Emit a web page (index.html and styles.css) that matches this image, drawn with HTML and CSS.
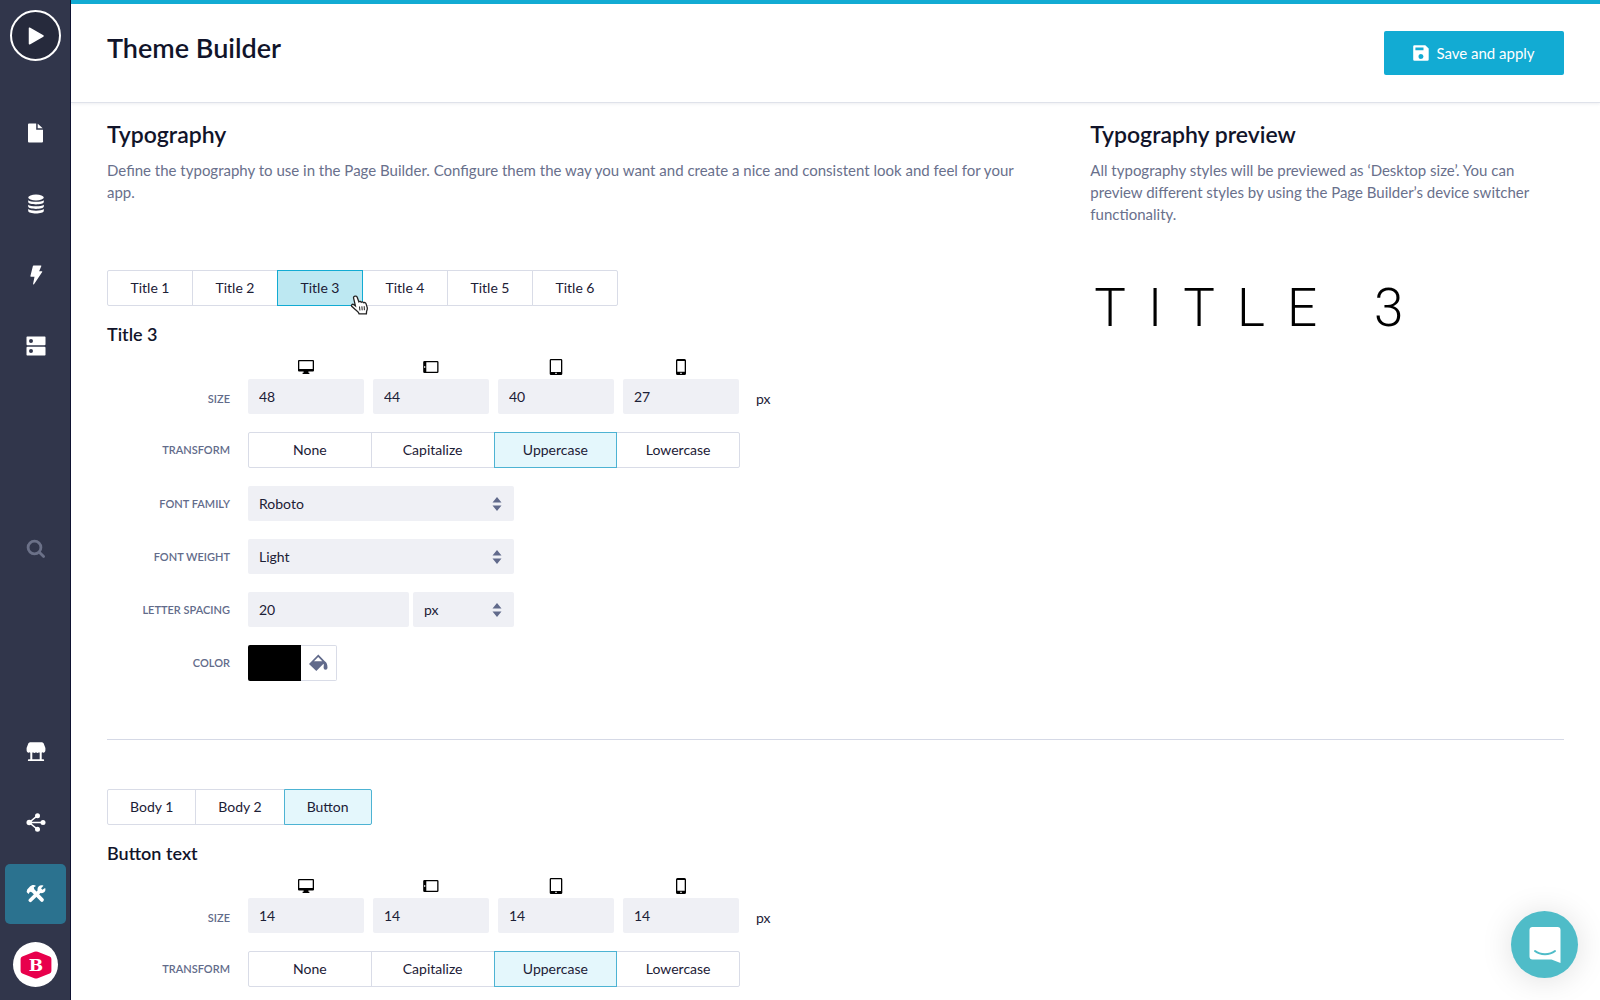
FILE: index.html
```html
<!DOCTYPE html>
<html lang="en">
<head>
<meta charset="utf-8">
<meta name="viewport" content="width=device-width, initial-scale=1">
<title>Theme Builder</title>
<link rel="stylesheet" href="styles.css">
</head>
<body>
<svg class="sprite" aria-hidden="true">
  <symbol id="desktop" viewBox="0 0 18 16"><path fill-rule="evenodd" d="M2 1h14a1 1 0 0 1 1 1v9.500a1 1 0 0 1-1 1h-4.600v1.300h1V15H5.600v-1.200h1v-1.300H2a1 1 0 0 1-1-1V2a1 1 0 0 1 1-1zm.3 1.300v7.700h13.400V2.300z"/></symbol>
  <symbol id="landscape" viewBox="0 0 18 16"><path fill-rule="evenodd" d="M2.500 2h12.700a1.300 1.300 0 0 1 1.300 1.300v9.400a1.300 1.300 0 0 1-1.300 1.300H2.500a1.300 1.300 0 0 1-1.300-1.300V3.300A1.300 1.300 0 0 1 2.500 2zM4.300 3.200v9.600h10.900V3.200zM2 7.300v1.400h1.300V7.300z"/></symbol>
  <symbol id="tablet" viewBox="0 0 18 16"><path fill-rule="evenodd" d="M4 0h10a1.300 1.300 0 0 1 1.300 1.300v13.400A1.300 1.300 0 0 1 14 16H4a1.300 1.300 0 0 1-1.300-1.300V1.300A1.300 1.300 0 0 1 4 0zm0 1.300v11.600h10V1.300zm4.300 12.500v1.200h1.400v-1.200z"/></symbol>
  <symbol id="phone" viewBox="0 0 18 16"><path fill-rule="evenodd" d="M5.500 0h7a1.500 1.500 0 0 1 1.500 1.500v13a1.500 1.500 0 0 1-1.500 1.500h-7A1.500 1.500 0 0 1 4 14.500v-13A1.500 1.500 0 0 1 5.500 0zm-.2 2v10.800h7.400V2zm3 11.800V15h1.400v-1.200z"/></symbol>
  <symbol id="sort" viewBox="0 0 10 14"><path d="M5 0l4.500 5.600H.5zM5 14L.5 8.400h9z"/></symbol>
</svg>

<nav class="sidebar" aria-label="Main">
  <div class="nav-group">
    <a class="nav-item nav-item--play" href="#" aria-label="Preview">
      <span class="play"><svg width="16" height="18" viewBox="0 0 16 18"><path d="M1.500 1.200v15.600L15 9z" stroke="#fff" stroke-width="1.500" stroke-linejoin="round"/></svg></span>
    </a>
    <a class="nav-item" href="#" aria-label="Pages">
      <svg width="20" height="20" viewBox="0 0 20 20"><path d="M3.500.5h6.700v6.300h6.800v11.700a1 1 0 0 1-1 1H3a1 1 0 0 1-1-1V1.500a1 1 0 0 1 1-1zM11.700.8a.5.500 0 0 1 .4.200l4.600 4.200H11.700z"/></svg>
    </a>
    <a class="nav-item" href="#" aria-label="Data">
      <svg width="20" height="20" viewBox="0 0 20 20"><ellipse cx="10" cy="3.500" rx="7.800" ry="2.900"/><path d="M2.200 6.200c2.500 2.200 13.100 2.200 15.600 0v1.900c0 3.100-15.600 3.100-15.600 0zM2.200 10.700c2.500 2.200 13.100 2.200 15.600 0v1.900c0 3.100-15.600 3.100-15.600 0zM2.200 15.100c2.500 2.200 13.100 2.200 15.600 0V17c0 3.300-15.600 3.300-15.600 0z"/></svg>
    </a>
    <a class="nav-item" href="#" aria-label="Actions">
      <svg width="20" height="20" viewBox="0 0 20 20"><path d="M7.600.6h7.200a.5.500 0 0 1 .5.700l-2.200 5h2.700a.5.500 0 0 1 .4.800L8 19.200c-.4.500-1.100.2-.9-.4l1.400-7H5a.6.600 0 0 1-.6-.7L6.900 1.100a.7.700 0 0 1 .7-.5z"/></svg>
    </a>
    <a class="nav-item" href="#" aria-label="Servers">
      <svg width="20" height="20" viewBox="0 0 20 20"><path fill-rule="evenodd" d="M1.200.5h17.600a.7.700 0 0 1 .7.700v7a1 1 0 0 1-1 1h-17a1 1 0 0 1-1-1v-7a.7.700 0 0 1 .7-.7zM5 2.900a2 2 0 1 0 0 4 2 2 0 0 0 0-4zM1.500 10.700h17a1 1 0 0 1 1 1v7a.7.700 0 0 1-.7.700H1.200a.7.700 0 0 1-.7-.7v-7a1 1 0 0 1 1-1zM5 13a2 2 0 1 0 0 4 2 2 0 0 0 0-4z"/></svg>
    </a>
  </div>
  <a class="nav-item nav-item--dim" href="#" aria-label="Search">
    <svg width="20" height="20" viewBox="0 0 20 20" fill="none" stroke="currentColor" stroke-width="2.800" stroke-linecap="round"><circle cx="8.500" cy="8.500" r="6.400"/><path d="M13.300 13.300l4.300 4.300"/></svg>
  </a>
  <div class="nav-group nav-group--bottom">
    <a class="nav-item" href="#" aria-label="Store">
      <svg width="20" height="20" viewBox="0 0 20 20"><path d="M4.600.2h10.800c1.100 0 2 .5 2.400 1.500l1.600 4.300v2.300c0 2.200-2 2.900-3.200 1.900a2.300 2.300 0 0 1-3.100.1 2.300 2.300 0 0 1-3.100 0 2.300 2.300 0 0 1-3.100 0 2.300 2.300 0 0 1-3.100-.1C2.600 11.200.6 10.500.6 8.300V6l1.600-4.300C2.600.7 3.500.2 4.600.2z"/><path d="M4.300 10h2v7.200h7.400V10h2v7.200h1.500a.9.900 0 0 1 0 1.900H2.800a.9.900 0 0 1 0-1.900h1.500z"/></svg>
    </a>
    <a class="nav-item" href="#" aria-label="Integrations">
      <svg width="20" height="20" viewBox="0 0 20 20"><circle cx="3.200" cy="9.500" r="2.700"/><circle cx="11.500" cy="2.700" r="2.500"/><circle cx="17" cy="9.500" r="2.500"/><circle cx="11.500" cy="16.300" r="2.500"/><path fill="none" stroke="#fff" stroke-width="1.500" d="M11.500 2.700L3.200 9.500l8.300 6.800M3.200 9.500H17"/></svg>
    </a>
    <a class="nav-item nav-item--active" href="#" aria-label="Tools" aria-current="page">
      <span class="tile"><svg width="20" height="20" viewBox="0 0 20 20"><path d="M3.700 2.700C5.600.8 8.500.5 10 2L7.800 3.200l.5 2.100 9 9.200a1.800 1.800 0 0 1-2.700 2.700L5.800 8.200 4 7.800 2.500 10 .6 8.100l.6-2.600z"/><path d="M17.500 1.700l-2.400 2.500 1.200 1.500 2.800-1.800c1.200 3-.9 6-4.600 5.200l-8.800 8.500a1.800 1.800 0 0 1-2.600-2.600l8.500-8.400c-.8-3.600 2.400-6.600 5.900-4.900z"/></svg></span>
    </a>
    <a class="nav-item" href="#" aria-label="Account">
      <span class="avatar"><svg width="34" height="28" viewBox="0 0 34 28"><path d="M15.300.8a4 4 0 0 1 3.400 0l12 4.700a2.500 2.500 0 0 1 1.700 2.400v12.200a2.500 2.500 0 0 1-1.700 2.400l-12 4.700a4 4 0 0 1-3.400 0l-12-4.700a2.500 2.500 0 0 1-1.700-2.400V7.900a2.500 2.500 0 0 1 1.700-2.400z" fill="#e8004c"/><text class="avatar-letter" x="17" y="20" text-anchor="middle">B</text></svg></span>
    </a>
  </div>
</nav>

<div class="page">
  <header class="page-header">
    <h1>Theme Builder</h1>
    <button class="save" type="button">
      <svg width="16" height="16" viewBox="0 0 16 16"><path fill-rule="evenodd" d="M1.500.3h10.800L15.700 3.500v11a1.300 1.300 0 0 1-1.300 1.300H1.500A1.300 1.300 0 0 1 .2 14.500V1.600A1.300 1.300 0 0 1 1.500.3zM2.400 2.400v2.900h8.100V2.400zM8 9a2.500 2.500 0 1 0 0 5 2.500 2.500 0 0 0 0-5z"/></svg>
      Save and apply
    </button>
  </header>

  <main class="content">
    <div class="intro">
      <section class="intro-main">
        <h2>Typography</h2>
        <p>Define the typography to use in the Page Builder. Configure them the way you want and create a nice and consistent look and feel for your app.</p>
      </section>
      <section>
        <h2>Typography preview</h2>
        <p>All typography styles will be previewed as ‘Desktop size’. You can preview different styles by using the Page Builder’s device switcher functionality.</p>
      </section>
    </div>

    <div class="block">
      <section class="editor">
        <div class="segments" role="group" aria-label="Title style">
          <button type="button">Title 1</button>
          <button type="button">Title 2</button>
          <button type="button" class="is-hovered" aria-pressed="true">Title 3
            <svg class="cursor" width="20" height="22" viewBox="0 0 20 22" aria-hidden="true"><path d="M4.800 1.200c1.300-.5 2.200.3 2.600 1.500l1.500 4.200c.7-.7 1.800-.6 2.300.3.700-.6 1.900-.4 2.300.5.900-.5 2.200.1 2.600 1.200l1.200 4c.3 1.300-.4 2.300-.7 3.300l-.2 2.600H9.100c-.6-2-2.100-2.800-3.600-4.100L1.700 11.300c-.9-1.200.6-2.600 2-1.700l1.700 1.300L3.600 3.200c-.3-.9.300-1.700 1.200-2z" fill="#fff" stroke="#222" stroke-width="1.300"/><path d="M9.500 11.500l.4 4M11.900 11.300l.3 4M14.200 11.200l.2 4" stroke="#222" stroke-width="1" fill="none"/></svg>
          </button>
          <button type="button">Title 4</button>
          <button type="button">Title 5</button>
          <button type="button">Title 6</button>
        </div>
        <h3>Title 3</h3>
        <form class="fields">
          <div class="row row--size">
            <label for="t-size">Size</label>
            <div class="sizes">
              <div class="size"><svg width="18" height="16"><use href="#desktop"/></svg><input id="t-size" type="text" value="48"></div>
              <div class="size"><svg width="18" height="16"><use href="#landscape"/></svg><input type="text" value="44" aria-label="Landscape tablet size"></div>
              <div class="size"><svg width="18" height="16"><use href="#tablet"/></svg><input type="text" value="40" aria-label="Tablet size"></div>
              <div class="size"><svg width="18" height="16"><use href="#phone"/></svg><input type="text" value="27" aria-label="Phone size"></div>
              <span class="unit">px</span>
            </div>
          </div>
          <div class="row">
            <span class="label" id="t-transform">Transform</span>
            <div class="segments segments--even" role="group" aria-labelledby="t-transform">
              <button type="button">None</button>
              <button type="button">Capitalize</button>
              <button type="button" aria-pressed="true">Uppercase</button>
              <button type="button">Lowercase</button>
            </div>
          </div>
          <div class="row">
            <label for="t-family">Font family</label>
            <div class="select"><select id="t-family"><option>Roboto</option></select><svg width="10" height="14"><use href="#sort"/></svg></div>
          </div>
          <div class="row">
            <label for="t-weight">Font weight</label>
            <div class="select"><select id="t-weight"><option>Light</option></select><svg width="10" height="14"><use href="#sort"/></svg></div>
          </div>
          <div class="row">
            <label for="t-spacing">Letter spacing</label>
            <div class="spacing">
              <input id="t-spacing" type="text" value="20">
              <div class="select"><select aria-label="Letter spacing unit"><option>px</option></select><svg width="10" height="14"><use href="#sort"/></svg></div>
            </div>
          </div>
          <div class="row">
            <label for="t-color">Color</label>
            <button class="color" id="t-color" type="button" aria-label="Pick a color">
              <span class="swatch"></span>
              <span class="bucket"><svg width="20" height="18" viewBox="0 0 20 18"><path fill-rule="evenodd" d="M9.300.6l6.500 6.700c1.900.8 2.700 3.600 2.700 6.500a1.900 1.900 0 0 1-3.900 0c0-2 .6-3.300-.1-4.100L7.300 16.900 0 9.900zM9.200 3L5 7.200h8.300z"/></svg></span>
            </button>
          </div>
        </form>
      </section>
      <div class="preview">Title 3</div>
    </div>

    <hr>

    <div class="block">
      <section class="editor">
        <div class="segments" role="group" aria-label="Text style">
          <button type="button">Body 1</button>
          <button type="button">Body 2</button>
          <button type="button" aria-pressed="true">Button</button>
        </div>
        <h3>Button text</h3>
        <form class="fields">
          <div class="row row--size">
            <label for="b-size">Size</label>
            <div class="sizes">
              <div class="size"><svg width="18" height="16"><use href="#desktop"/></svg><input id="b-size" type="text" value="14"></div>
              <div class="size"><svg width="18" height="16"><use href="#landscape"/></svg><input type="text" value="14" aria-label="Landscape tablet size"></div>
              <div class="size"><svg width="18" height="16"><use href="#tablet"/></svg><input type="text" value="14" aria-label="Tablet size"></div>
              <div class="size"><svg width="18" height="16"><use href="#phone"/></svg><input type="text" value="14" aria-label="Phone size"></div>
              <span class="unit">px</span>
            </div>
          </div>
          <div class="row">
            <span class="label" id="b-transform">Transform</span>
            <div class="segments segments--even" role="group" aria-labelledby="b-transform">
              <button type="button">None</button>
              <button type="button">Capitalize</button>
              <button type="button" aria-pressed="true">Uppercase</button>
              <button type="button">Lowercase</button>
            </div>
          </div>
        </form>
      </section>
    </div>
  </main>
</div>

<button class="chat" type="button" aria-label="Open chat">
  <svg width="34" height="38" viewBox="0 0 34 38"><path fill="#fff" d="M4.500 1h25A3 3 0 0 1 32.500 4v33l-9-3.500h-19a3 3 0 0 1-3-3V4a3 3 0 0 1 3-3z"/><path d="M7 25c5.500 4.300 14.500 4.300 20 0" fill="none" stroke="#4fbcc8" stroke-width="2" stroke-linecap="round"/></svg>
</button>
</body>
</html>
```
FILE: styles.css
```css
*,
*::before,
*::after {
  box-sizing: border-box;
}

body {
  margin: 0;
  display: flex;
  min-height: 100vh;
  background: #fff;
  color: #1c2036;
  font-family: Lato, "Liberation Sans", sans-serif;
  font-size: 14px;
}

button,
input,
select {
  margin: 0;
  font: inherit;
  color: inherit;
}

h1, h2, h3, p {
  margin: 0;
}

h1, h2, h3 {
  color: #11142a;
  font-weight: 600;
}

svg {
  display: block;
}

.sprite {
  position: absolute;
  width: 0;
  height: 0;
}

/* Sidebar */
.sidebar {
  position: sticky;
  top: 0;
  flex: none;
  display: flex;
  flex-direction: column;
  justify-content: space-between;
  width: 71px;
  height: 100vh;
  background: #31364b;
  box-shadow: inset -1px 0 #0f1332;
}

.nav-item {
  display: grid;
  place-items: center;
  height: 71px;
  color: #fff;
}

.nav-item svg {
  fill: currentColor;
}

.nav-item--play {
  margin-bottom: 26px;
}

.nav-item--dim {
  color: #6b7188;
}

.nav-item--dim svg {
  fill: none;
}

.play {
  display: grid;
  place-items: center;
  width: 51px;
  height: 51px;
  border: 2px solid #fff;
  border-radius: 50%;
  background: #262a3c;
}

.tile {
  display: grid;
  place-items: center;
  width: 61px;
  height: 60px;
  border-radius: 5px;
  background: #2b728f;
}

.avatar {
  display: grid;
  place-items: center;
  width: 45px;
  height: 45px;
  border-radius: 50%;
  background: #fff;
}

.avatar-letter {
  font: bold 17px "DejaVu Serif", serif;
  fill: #fff;
}

/* Header */
.page {
  flex: 1;
  min-width: 0;
}

.page-header {
  display: flex;
  justify-content: space-between;
  align-items: flex-start;
  height: 103px;
  padding: 27px 36px 0;
  border-top: 4px solid #12abd3;
  border-bottom: 1px solid #dfe2ea;
  box-shadow: 0 1px 3px rgba(30, 40, 80, 0.08);
}

h1 {
  font-size: 27px;
  line-height: 34px;
}

.save {
  display: flex;
  align-items: center;
  justify-content: center;
  gap: 7px;
  width: 180px;
  height: 44px;
  border: 0;
  border-radius: 2px;
  background: #12abd3;
  color: #fff;
  font-size: 15px;
}

.save svg {
  fill: #fff;
}

/* Content */
.content {
  padding: 17px 36px 13px;
}

.intro,
.block {
  display: grid;
  grid-template-columns: 2fr 1fr;
  column-gap: 36px;
}

.intro {
  min-height: 150px;
}

.intro-main {
  padding-right: 24px;
}

h2 {
  font-size: 23px;
  line-height: 28px;
}

.intro p {
  margin-top: 11px;
  color: #69708c;
  font-size: 15px;
  line-height: 22px;
}

h3 {
  margin: 16px 0 13px;
  font-size: 18px;
  line-height: 24px;
}

hr {
  height: 1px;
  margin: 58px 0 49px;
  border: 0;
  background: #d5d9e6;
}

.preview {
  padding: 7px 0 0 4px;
  color: #000;
  font: 300 53px/62px Roboto, sans-serif;
  letter-spacing: 22px;
  text-transform: uppercase;
}

/* Segmented buttons */
.segments {
  display: flex;
  height: 36px;
}

.segments button {
  position: relative;
  min-width: 86px;
  padding: 0 22px 2px;
  border: 1px solid #d9dce7;
  background: #fff;
}

.segments button + button {
  margin-left: -1px;
}

.segments button:first-child {
  border-radius: 2px 0 0 2px;
}

.segments button:last-child {
  border-radius: 0 2px 2px 0;
}

.segments button[aria-pressed="true"] {
  z-index: 1;
  border-color: #4db3d3;
  background: #e4f7fc;
}

.segments button.is-hovered {
  border-color: #12abd3;
  background: #bde8f2;
}

.segments--even {
  width: 492px;
}

.segments--even button {
  flex: 1;
}

.cursor {
  position: absolute;
  right: -8px;
  bottom: -12px;
}

/* Fields */
.fields {
  display: grid;
  row-gap: 18px;
}

.row {
  display: grid;
  grid-template-columns: 123px 1fr;
  column-gap: 18px;
  align-items: center;
}

.row--size {
  align-items: end;
}

label,
.label {
  color: #626b8a;
  font-size: 11px;
  font-weight: 600;
  line-height: 30px;
  text-align: right;
  text-transform: uppercase;
}

input,
select {
  width: 100%;
  height: 35px;
  padding: 0 11px;
  border: 0;
  border-radius: 2px;
  background: #eff0f5;
  appearance: none;
}

.sizes {
  display: flex;
  align-items: flex-end;
  gap: 9px;
}

.size {
  display: grid;
  justify-items: center;
  row-gap: 4px;
  width: 116px;
}

.unit {
  margin-left: 8px;
  line-height: 30px;
}

.select {
  position: relative;
  width: 266px;
}

.select svg {
  position: absolute;
  top: 11px;
  right: 12px;
  fill: #616a8b;
  pointer-events: none;
}

.spacing {
  display: grid;
  grid-template-columns: 161px 101px;
  column-gap: 4px;
}

.spacing .select {
  width: auto;
}

.color {
  display: flex;
  width: 89px;
  height: 36px;
  padding: 0;
  border: 0;
  background: none;
}

.swatch {
  width: 53px;
  border-radius: 2px 0 0 2px;
  background: #000;
}

.bucket {
  flex: 1;
  display: grid;
  place-items: center;
  border: 1px solid #d9dce7;
  border-left: 0;
  border-radius: 0 2px 2px 0;
}

.bucket svg {
  fill: #616a8b;
}

/* Chat launcher */
.chat {
  position: fixed;
  right: 22px;
  bottom: 22px;
  display: grid;
  place-items: center;
  width: 67px;
  height: 67px;
  padding: 0;
  border: 0;
  border-radius: 50%;
  background: #4fbcc8;
  box-shadow: 0 2px 32px rgba(0, 0, 0, 0.13);
}
```
